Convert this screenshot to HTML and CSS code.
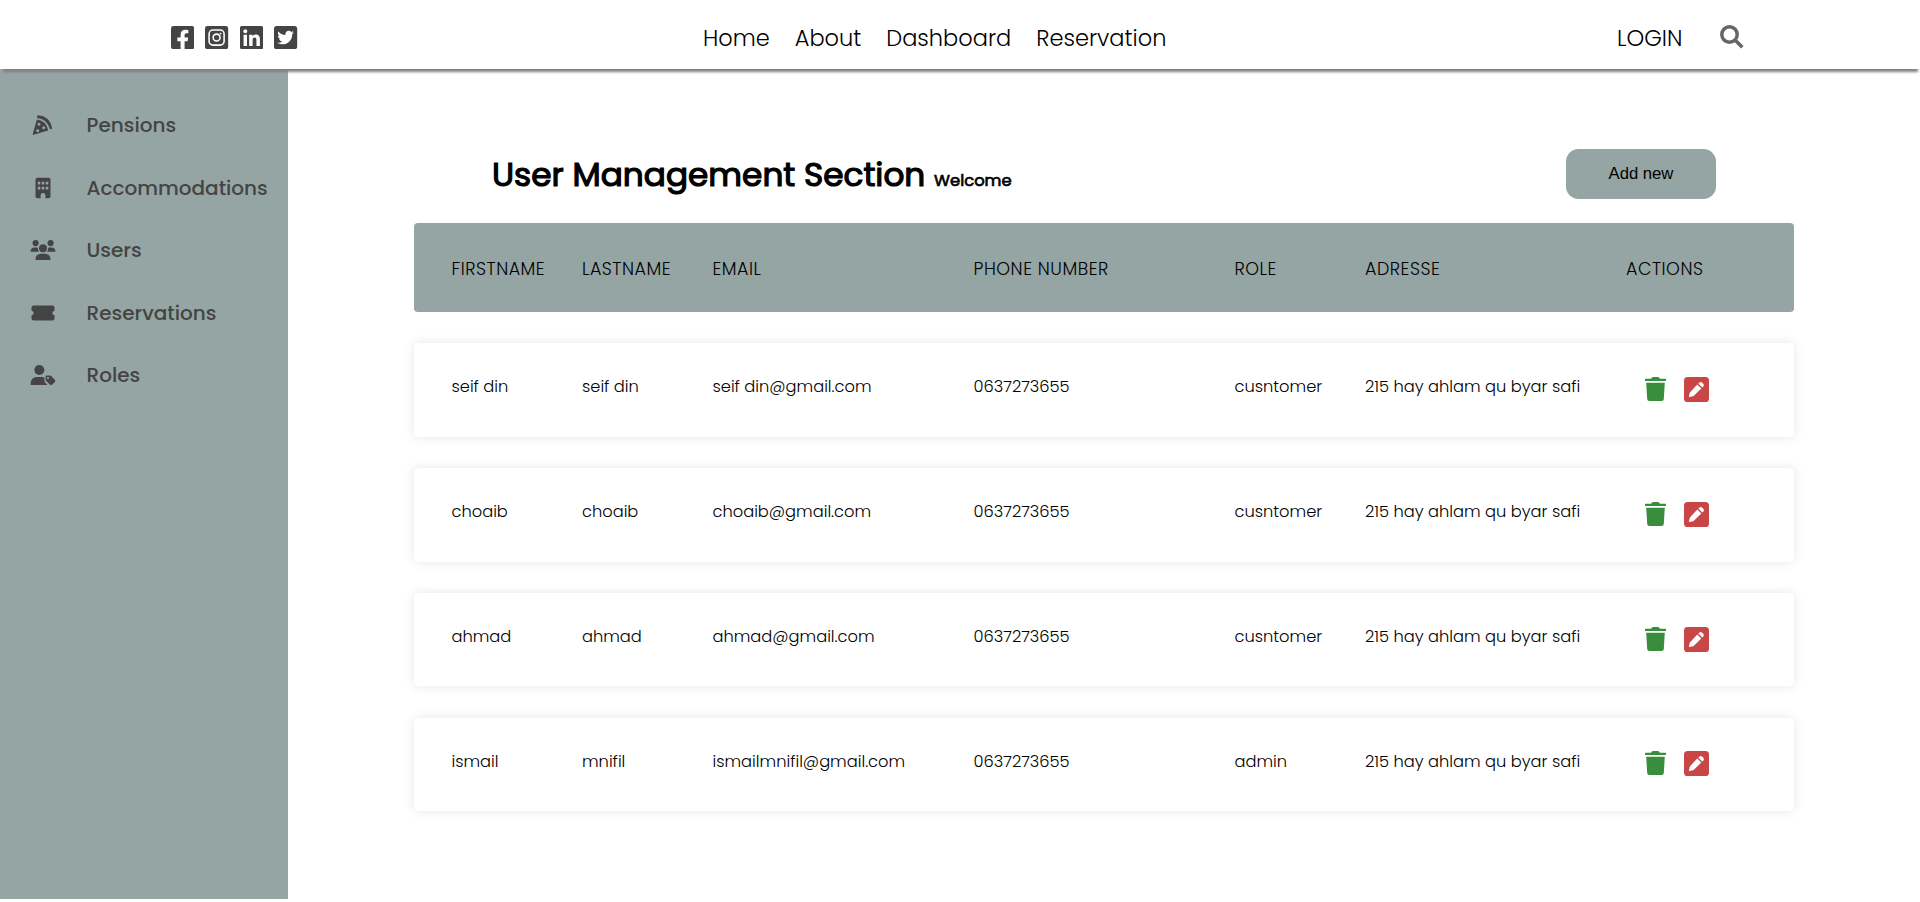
FILE: index.html
```html
<!DOCTYPE html>
<html lang="en">
<head>
<meta charset="utf-8">
<title>User Management</title>
<link rel="stylesheet" href="styles.css">
</head>
<body>
<svg class="defs" width="0" height="0" aria-hidden="true">
  <symbol id="trash" viewBox="0 0 21 24">
    <path d="M0.6 1.7H6L7 .5Q7.3 0 8 0H13Q13.7 0 14 .5L15 1.7H20.4Q21 1.7 21 2.3V3.4Q21 4 20.4 4H.6Q0 4 0 3.4V2.3Q0 1.7.6 1.7ZM1.2 5.8H19.8L18.8 22Q18.6 24 16.7 24H4.300Q2.400 24 2.200 22Z"/>
  </symbol>
  <symbol id="pen" viewBox="0 0 25 25">
    <rect width="25" height="25" rx="3.6"/>
    <path fill="#fff" d="M13.300 7.600 17.300 11.600 9.900 18.700Q9.500 19.100 9 19.200L5.300 20Q4.800 20.100 4.900 19.600L5.800 15.800Q5.900 15.300 6.300 14.900ZM14.300 6.600 15.300 5.700Q16.800 4.400 18.400 5.900L19.100 6.600Q20.600 8.200 19.200 9.700L18.300 10.600Z"/>
  </symbol>
</svg>

<header class="topbar">
  <div class="social">
    <svg viewBox="0 32 448 448"><path d="M400 32H48A48 48 0 0 0 0 80v352a48 48 0 0 0 48 48h137.250V327.690h-63V256h63v-54.640c0-62.150 37-96.480 93.670-96.480 27.140 0 55.520 4.840 55.520 4.840v61h-31.270c-30.810 0-40.420 19.120-40.420 38.730V256h68.780l-11 71.690h-57.780V480H400a48 48 0 0 0 48-48V80a48 48 0 0 0-48-48z"/></svg>
    <svg viewBox="0 32 448 448"><rect y="32" width="448" height="448" rx="48"/><g fill="none" stroke="#fff" stroke-width="30"><rect x="79" y="111" width="290" height="290" rx="74"/><circle cx="224" cy="256" r="67"/></g><circle cx="301" cy="179" r="18" fill="#fff"/></svg>
    <svg viewBox="0 32 448 448"><path d="M416 32H31.900C14.300 32 0 46.500 0 64.300v383.400C0 465.500 14.300 480 31.900 480H416c17.600 0 32-14.500 32-32.300V64.300c0-17.800-14.400-32.300-32-32.300zM135.400 416H69V202.200h66.500V416zm-33.200-243c-21.300 0-38.500-17.300-38.500-38.500S80.900 96 102.200 96c21.200 0 38.500 17.300 38.500 38.500 0 21.300-17.200 38.500-38.500 38.500zm282.100 243h-66.400V312c0-24.800-.5-56.700-34.500-56.700-34.600 0-39.900 27-39.900 54.900V416h-66.400V202.200h63.700v29.200h.9c8.900-16.800 30.600-34.500 62.900-34.500 67.200 0 79.700 44.300 79.700 101.900V416z"/></svg>
    <svg viewBox="0 32 448 448"><path d="M400 32H48C21.500 32 0 53.500 0 80v352c0 26.500 21.500 48 48 48h352c26.500 0 48-21.500 48-48V80c0-26.500-21.500-48-48-48zm-48.900 158.800c.2 2.800.2 5.700.2 8.500 0 86.700-66 186.600-186.600 186.600-37.200 0-71.700-10.800-100.700-29.400 5.300.6 10.400.8 15.800.8 30.700 0 58.900-10.400 81.400-28-28.800-.6-53-19.500-61.300-45.500 10.100 1.500 19.200 1.500 29.600-1.200-30-6.100-52.500-32.500-52.500-64.400v-.8c8.700 4.900 18.900 7.900 29.600 8.300a65.447 65.447 0 0 1-29.200-54.600c0-12.200 3.200-23.400 8.900-33.100 32.300 39.800 80.800 65.800 135.200 68.600-9.300-44.500 24-80.600 64-80.600 18.900 0 35.900 7.900 47.900 20.700 14.800-2.800 29-8.300 41.600-15.800-4.900 15.200-15.200 28-28.800 36.100 13.200-1.400 26-5.100 37.800-10.200-8.900 13.100-20.100 24.700-32.900 34z"/></svg>
  </div>
  <nav class="menu">
    <a>Home</a><a>About</a><a>Dashboard</a><a>Reservation</a>
  </nav>
  <div class="account">
    <a>LOGIN</a>
    <svg class="search" viewBox="0 0 24 24"><circle cx="9.500" cy="9.500" r="7.700" fill="none" stroke="#666" stroke-width="3.500"/><path d="M14.800 14.800 22.300 22.300" stroke="#666" stroke-width="3.600"/></svg>
  </div>
</header>

<div class="layout">
  <aside class="sidebar">
    <a class="item"><svg viewBox="0 0 26 22"><path d="M8 1.300Q19.500 2 22 13.800Q22.200 14.900 21.200 15.200Q20.100 15.400 19.700 14.400Q17.300 5.300 7.900 4.200Q7 4 7 2.800Q7 1.400 8 1.300Z"/><path fill-rule="evenodd" d="M6.900 5.600Q15.500 6.600 18 15.600L18.100 16.500 3.600 20.800Q2.500 21 2.700 19.900ZM9 8.700a1.500 1.500 0 1 0 .01 0ZM13.700 12.200a1.500 1.500 0 1 0 .01 0ZM7.700 15.300a1.500 1.500 0 1 0 .01 0Z"/></svg><span>Pensions</span></a>
    <a class="item"><svg viewBox="0 0 26 22"><path fill-rule="evenodd" d="M7.500.8H18.500Q20.500.8 20.500 2.800V19.200Q20.500 21.200 18.500 21.200H15.400V18.200Q15.400 16 13 16T10.600 18.200V21.200H7.500Q5.500 21.200 5.500 19.200V2.800Q5.500.8 7.500.8ZM7.800 4.700V7.500H10.300V4.700ZM11.800 4.700V7.500H14.300V4.700ZM15.800 4.700V7.500H18.300V4.700ZM7.800 9.700V12.500H10.300V9.700ZM11.800 9.700V12.500H14.300V9.700ZM15.800 9.700V12.500H18.300V9.700Z"/></svg><span>Accommodations</span></a>
    <a class="item"><svg viewBox="0 0 26 22"><circle cx="5.600" cy="4.100" r="3.100"/><circle cx="20.600" cy="4.100" r="3.100"/><circle cx="13" cy="9.300" r="4"/><path d="M.5 12.500Q.7 8.500 4.500 8.500H6.500Q7.500 8.500 8 8.700Q7.600 10.900 9 12.700H.8ZM25.500 12.500Q25.300 8.500 21.500 8.500H19.500Q18.500 8.500 18 8.700Q18.400 10.900 17 12.700H25.200ZM5.500 20.400Q5.700 14.900 10.700 14.700H15.300Q20.300 14.900 20.500 20.400Q20.500 21 19.900 21H6.100Q5.500 21 5.500 20.400Z"/></svg><span>Users</span></a>
    <a class="item"><svg viewBox="0 0 26 22"><path d="M3.500 3.500H22.500Q24.500 3.500 24.500 5.500V8.700Q22.300 9 22.300 11T24.500 13.300V16.500Q24.500 18.500 22.500 18.500H3.500Q1.500 18.500 1.500 16.500V13.300Q3.700 13 3.700 11T1.500 8.700V5.500Q1.500 3.500 3.500 3.500Z"/></svg><span>Reservations</span></a>
    <a class="item"><svg viewBox="0 0 26 22"><circle cx="9.300" cy="6" r="5"/><path d="M.5 20.300Q.6 13.300 7 13H11.600Q13.500 13.100 14.500 13.700V16.900Q14.500 18 15.300 18.800L17.300 20.700Q17 21 16.500 21H1.200Q.5 21 .5 20.300Z"/><path fill-rule="evenodd" d="M15.600 12.300Q15.600 11.500 16.400 11.500H19.800Q20.600 11.500 21.200 12.100L25 15.900Q25.900 16.900 25 17.800L22 20.800Q21 21.600 20.100 20.800L16.200 17.100Q15.600 16.500 15.600 15.700ZM18 12.900a1 1 0 1 0 .01 0Z"/></svg><span>Roles</span></a>
  </aside>

  <main class="content">
    <div class="titlebar">
      <h2>User Management Section <small>Welcome</small></h2>
      <button type="button">Add new</button>
    </div>
    <ul class="table">
      <li class="head"><div>Firstname</div><div>Lastname</div><div>Email</div><div>Phone number</div><div>Role</div><div>Adresse</div><div>Actions</div></li>
      <li class="row"><div>seif din</div><div>seif din</div><div>seif din@gmail.com</div><div>0637273655</div><div>cusntomer</div><div>215 hay ahlam qu byar safi</div><div class="actions"><svg class="del"><use href="#trash"/></svg><svg class="edit"><use href="#pen"/></svg></div></li>
      <li class="row"><div>choaib</div><div>choaib</div><div>choaib@gmail.com</div><div>0637273655</div><div>cusntomer</div><div>215 hay ahlam qu byar safi</div><div class="actions"><svg class="del"><use href="#trash"/></svg><svg class="edit"><use href="#pen"/></svg></div></li>
      <li class="row"><div>ahmad</div><div>ahmad</div><div>ahmad@gmail.com</div><div>0637273655</div><div>cusntomer</div><div>215 hay ahlam qu byar safi</div><div class="actions"><svg class="del"><use href="#trash"/></svg><svg class="edit"><use href="#pen"/></svg></div></li>
      <li class="row"><div>ismail</div><div>mnifil</div><div>ismailmnifil@gmail.com</div><div>0637273655</div><div>admin</div><div>215 hay ahlam qu byar safi</div><div class="actions"><svg class="del"><use href="#trash"/></svg><svg class="edit"><use href="#pen"/></svg></div></li>
    </ul>
  </main>
</div>
</body>
</html>
```
FILE: styles.css
```css
* { box-sizing: border-box; }
body {
  margin: 0;
  background: #fff;
  color: #000;
  font-family: Poppins, Inter, sans-serif;
  font-weight: 300;
  overflow: hidden;
}
.defs { display: block; }

.topbar {
  position: relative;
  display: grid;
  grid-template-columns: 703px 1fr 303px;
  align-items: center;
  height: 69px;
  padding-top: 6px;
  background: #fff;
  box-shadow: 0 5px 2.500px -2.500px gray;
  font-size: 22.500px;
}
.social { display: flex; gap: 11.300px; padding-left: 171px; }
.social svg { width: 23.200px; height: 23.200px; fill: #444; }
.menu { display: flex; gap: 25px; }
.account { display: flex; align-items: center; gap: 38px; }
.search { width: 24px; height: 24px; margin-top: -2px; }

.layout { display: flex; }
.sidebar {
  width: 288px;
  height: 830px;
  padding: 25px 0 0 30px;
  background: #95a5a4;
}
.item {
  display: flex;
  align-items: center;
  gap: 30.500px;
  height: 62.500px;
  color: #444;
  font-size: 20px;
  font-weight: 500;
}
.item svg { flex: none; width: 26px; height: 22px; fill: #444; }

.content { flex: 1; padding: 80px 126px 0; }
.titlebar {
  display: flex;
  justify-content: space-between;
  height: 74px;
  padding: 0 78px;
}
h2 {
  margin: 0;
  padding-top: 1.500px;
  font-size: 32.750px;
  line-height: 48px;
  font-weight: 400;
  -webkit-text-stroke: 1.200px #000;
}
small { font-size: 16.380px; -webkit-text-stroke-width: .7px; }
button {
  width: 150px;
  height: 50px;
  padding: 0 0 1px;
  border: 0;
  border-radius: 12.500px;
  background: #95a5a4;
  color: #000;
  font: 16.670px "Liberation Sans", Arial, sans-serif;
}
.table {
  display: flex;
  flex-direction: column;
  gap: 31.250px;
  margin: 0;
  padding: 0;
  list-style: none;
  font-size: 16.250px;
  line-height: 24px;
}
.head, .row {
  display: grid;
  grid-template-columns: 1fr 1fr 2fr 2fr 1fr 2fr 1fr;
  padding: 33.500px 37.500px 0;
  border-radius: 4px;
  white-space: nowrap;
}
.head {
  height: 89px;
  background: #95a5a4;
  font-size: 17.500px;
  letter-spacing: .03em;
  text-transform: uppercase;
}
.row {
  height: 93.500px;
  padding-top: 32px;
  background: #fff;
  box-shadow: 0 0 11px rgba(0, 0, 0, .1);
}
.actions { display: flex; gap: 18px; padding: 1.750px 0 0 18.500px; }
.del { width: 21px; height: 24px; flex: none; fill: #388e3c; }
.edit { width: 25px; height: 25px; flex: none; fill: #c94646; }
```
